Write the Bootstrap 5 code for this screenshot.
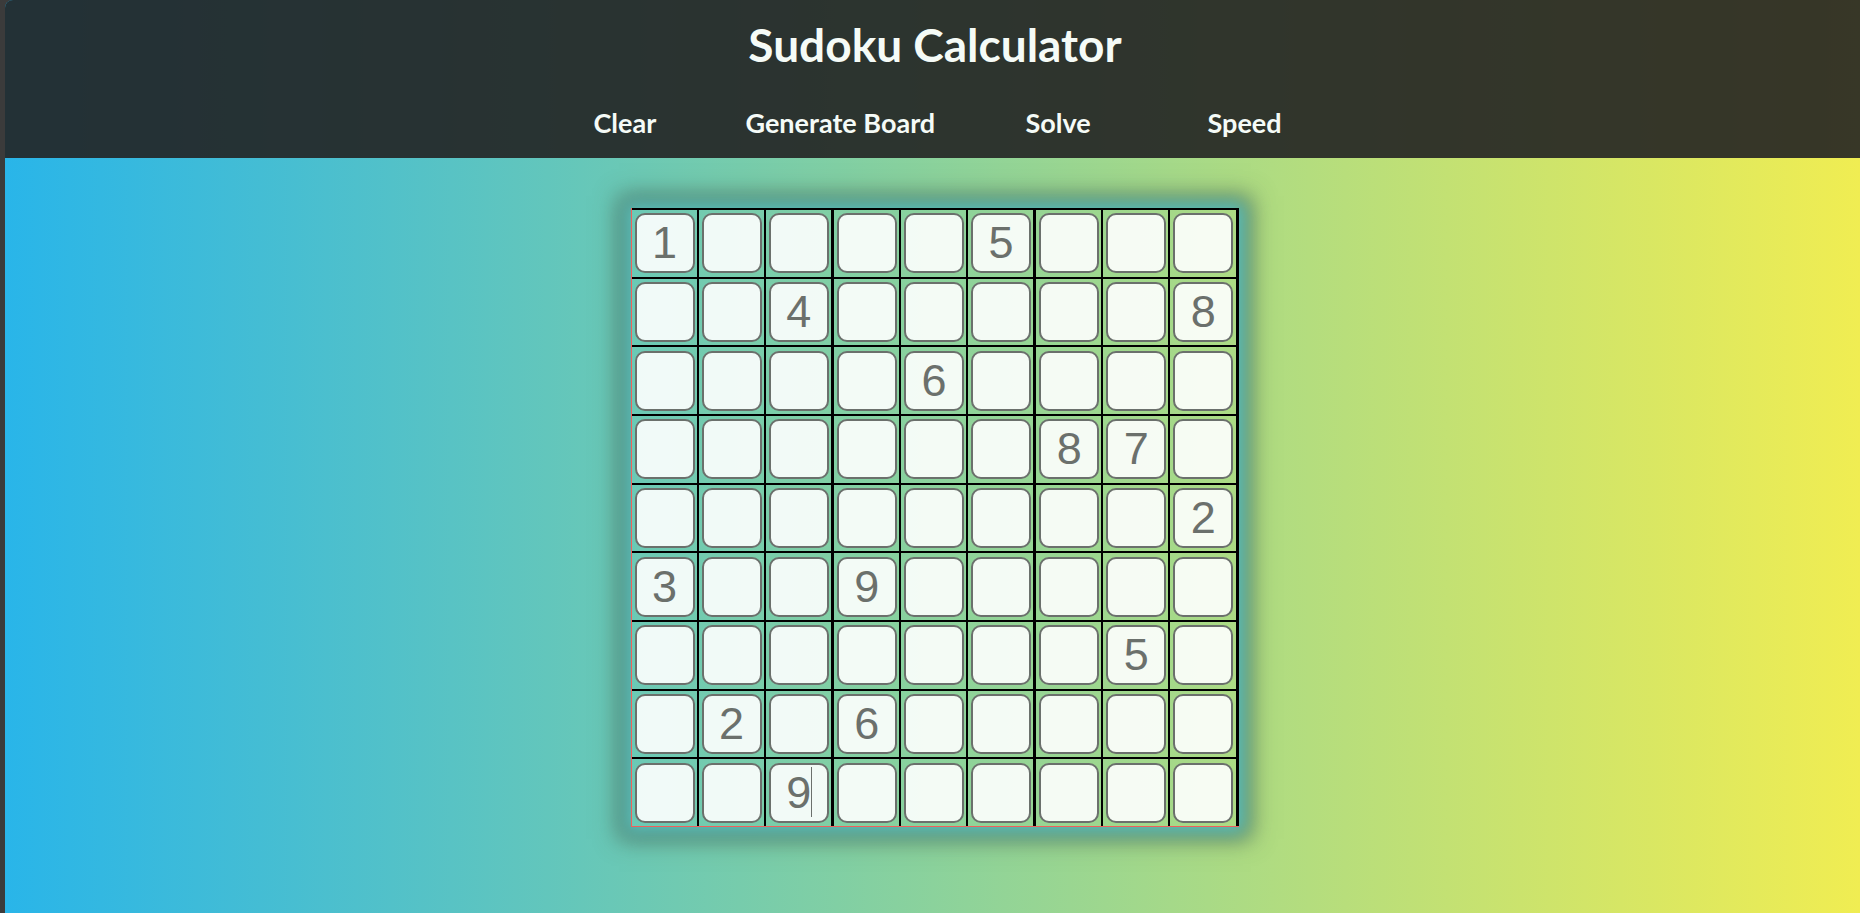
<!DOCTYPE html>
<html lang="en">
<head>
<meta charset="utf-8">
<meta name="viewport" content="width=device-width, initial-scale=1">
<title>Sudoku Calculator</title>
<link href="https://cdn.jsdelivr.net/npm/bootstrap@5.3.0/dist/css/bootstrap.min.css" rel="stylesheet">
<style>
  html { background: #3b3b3b; }
  body {
    margin-left: 5px;
    font-family: "Comic Sans MS", Lato, sans-serif;
    font-weight: 700;
    background: none;
  }
  .page {
    background: linear-gradient(to right, #29b5e9, #8bd29c 50%, #f0ed52);
    border-top-left-radius: 8px;
    overflow: hidden;
  }
  .site-header { background: rgba(34, 34, 34, .9); height: 158px; padding-left: 5px; }
  .site-title { font-size: 46px; line-height: 64px; color: #f5fbf7; padding-top: 13px; font-weight: 700; }
  .menu { display: grid; grid-template-columns: 62px 190px 92px 74px; column-gap: 90px; padding: 30px 0 0 5px; }
  .menu-btn { font-size: 27px; line-height: 32px; color: #f5fbf7; font-weight: 700; background: none; border: 0; padding: 0; white-space: nowrap; text-align: left; }
  .board-area { padding: 50px 0 50px 4px; }
  .board {
    width: 608px; height: 619px;
    border-collapse: separate; border-spacing: 0;
    border-left: 1px solid #f0605c; border-bottom: 1px solid #f0605c;
  }
  .board-wrap { box-shadow: 0 0 16px 6px #5ac3c0, 0 0 22px 12px rgba(65, 80, 60, .7); }
  .board td { position: relative; border-top: 2px solid #000; border-right: 2px solid #000; padding: 0 2px 0 3px; vertical-align: middle; }
  .board td:nth-child(3n) { border-right-width: 3px; }
  .cell {
    display: block; width: 60px; height: 60px; padding: 0;
    border: 2px solid #6b706c; border-radius: 10px;
    background: rgba(255, 255, 255, .9); color: #6b706c; caret-color: transparent;
    font: 400 45px/56px "Liberation Sans", Arial, sans-serif; text-align: center; outline: 0;
  }
  .text-cursor { position: absolute; left: 45px; top: 8px; width: 1px; height: 50px; background: #6b706c; }
</style>
</head>
<body>
<div class="page min-vh-100">
  <header class="site-header text-center">
    <h1 class="site-title m-0">Sudoku Calculator</h1>
    <nav class="menu justify-content-center" aria-label="Board controls">
      <button type="button" class="menu-btn">Clear</button>
      <button type="button" class="menu-btn">Generate Board</button>
      <button type="button" class="menu-btn">Solve</button>
      <button type="button" class="menu-btn">Speed</button>
    </nav>
  </header>
  <main class="board-area d-flex justify-content-center">
    <div class="board-wrap"><table class="board" aria-label="Sudoku board"><tbody id="rows"></tbody></table></div>
  </main>
</div>
<script src="https://cdn.jsdelivr.net/npm/bootstrap@5.3.0/dist/js/bootstrap.bundle.min.js"></script>
<script>
  const puzzle = ["1....5...", "..4.....8", "....6....", "......87.", "........2", "3..9.....", ".......5.", ".2.6.....", "..9......"];
  const body = document.getElementById("rows");
  puzzle.forEach((line, r) => {
    const row = body.insertRow();
    [...line].forEach((ch, c) => {
      const input = document.createElement("input");
      input.type = "text";
      input.className = "cell";
      input.maxLength = 1;
      input.value = ch === "." ? "" : ch;
      input.setAttribute("aria-label", `Row ${r + 1}, column ${c + 1}`);
      const td = row.insertCell();
      td.append(input);
      // the cell being edited shows a steady cursor
      if (r === 8 && c === 2) {
        const cursor = document.createElement("span");
        cursor.className = "text-cursor";
        td.append(cursor);
      }
    });
  });
</script>
</body>
</html>
